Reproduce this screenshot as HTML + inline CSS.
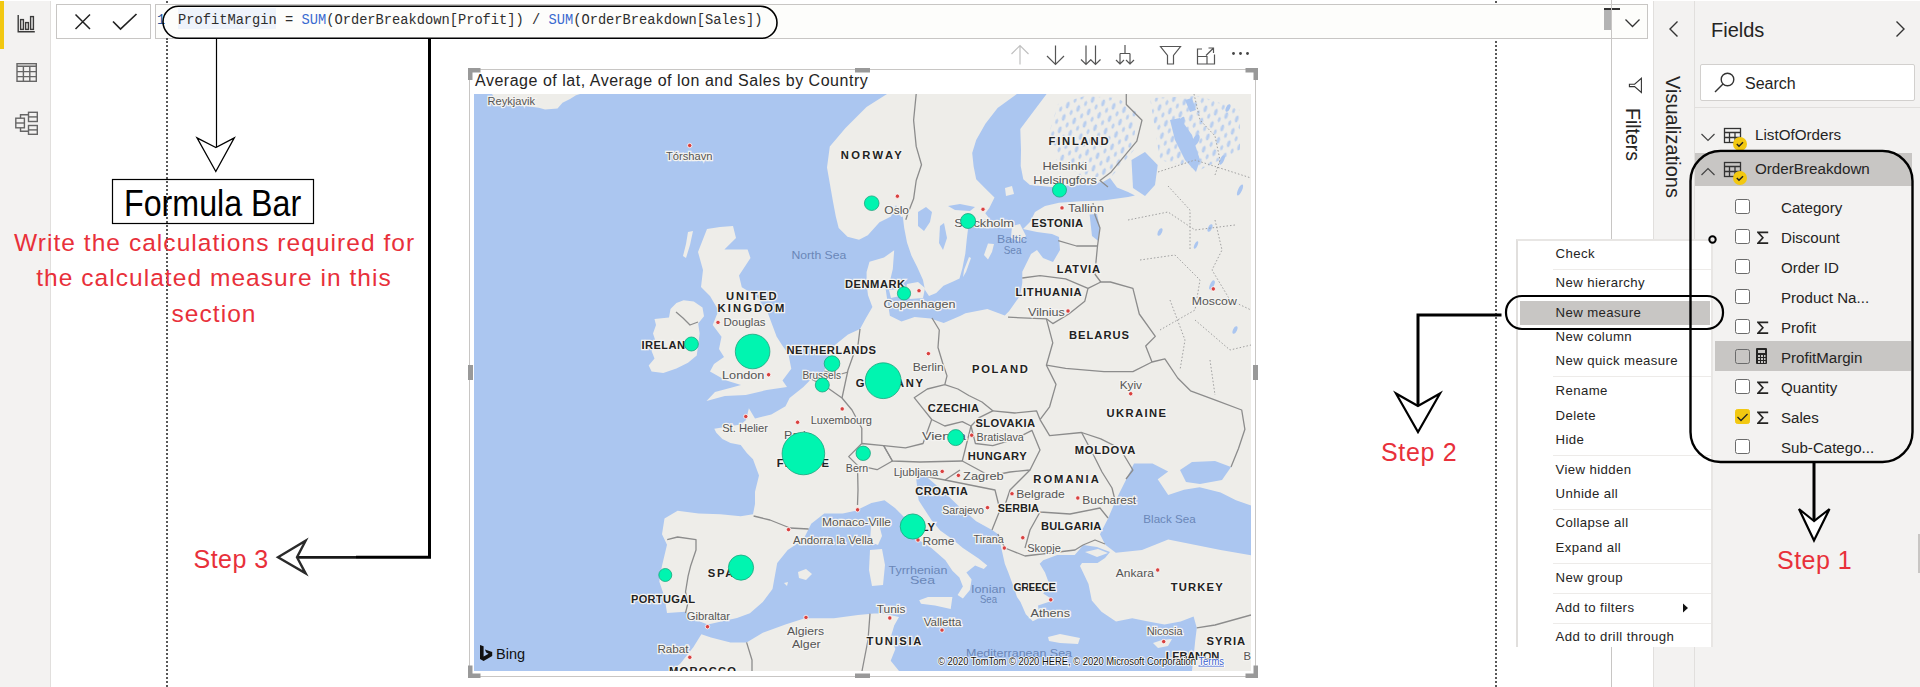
<!DOCTYPE html>
<html><head><meta charset="utf-8">
<style>
*{margin:0;padding:0;box-sizing:border-box}
html,body{width:1920px;height:687px;overflow:hidden;background:#fff;font-family:"Liberation Sans",sans-serif;position:relative}
.a{position:absolute}
#side{left:0;top:1px;width:51px;height:686px;background:#f3f2f1;border-right:1px solid #e1dfdd}
#ybar{left:0;top:1px;width:4px;height:48px;background:#f2c811}
.fbox{border:1px solid #c8c6c4;background:#fff}
.code{font-family:"Liberation Mono",monospace;font-size:13.72px;color:#2e2e2e;white-space:pre}
.menu div.it{position:absolute;left:37.5px;font-size:13.2px;letter-spacing:0.4px;color:#252423;white-space:nowrap}
.sep{position:absolute;left:35px;width:158px;height:1px;background:#edebe9}
.fld{position:absolute;left:86px;font-size:15.1px;color:#252423;white-space:nowrap}
.cb{position:absolute;left:40px;width:15px;height:15px;border:1px solid #6b6b6b;border-radius:2.5px;background:#fff}
.sig{position:absolute;left:62px}
.red{color:#e8303a;font-size:24px;white-space:nowrap}
</style></head>
<body>
<!-- left sidebar -->
<div id="side" class="a"></div>
<div id="ybar" class="a"></div>
<svg class="a" style="left:0;top:0" width="51" height="140">
  <g fill="none" stroke="#3a3a3a" stroke-width="1.4">
    <path d="M18.2 15v16.8h16.6"/>
    <rect x="20.6" y="19.6" width="2.8" height="9.8"/>
    <rect x="25.6" y="22.6" width="2.8" height="6.8"/>
    <rect x="30.6" y="16.6" width="2.8" height="12.8"/>
  </g>
  <g fill="none" stroke="#666" stroke-width="1.4">
    <rect x="17" y="63.7" width="19.3" height="17.6"/>
    <path d="M17 66.3h19.3M17 71.6h19.3M17 76.6h19.3M23.4 66.3v15M29.8 66.3v15"/>
    <rect x="15.8" y="118.2" width="8.6" height="9.6"/>
    <path d="M15.8 123h8.6"/>
    <rect x="28.5" y="112.3" width="8.8" height="9.2"/>
    <path d="M28.5 116.9h8.8"/>
    <rect x="28.5" y="125.5" width="8.8" height="8.8"/>
    <path d="M28.5 129.9h8.8"/>
    <path d="M20.5 118.2v-3.5h8M20.5 127.8v3.5h8"/>
  </g>
</svg>
<!-- formula bar -->
<div class="a fbox" style="left:56px;top:4px;width:95px;height:35px"></div>
<svg class="a" style="left:56px;top:4px" width="95" height="35">
  <path d="M19.5 10.5l14.5 14.5M34 10.5l-14.5 14.5" stroke="#222" stroke-width="1.5" fill="none"/>
  <path d="M57 17.5l7.5 7.5l16-15" stroke="#222" stroke-width="1.7" fill="none"/>
</svg>
<div class="a fbox" style="left:155px;top:4px;width:1493px;height:35px;background:#fdfdfb"></div>
<div class="a" style="left:178px;top:8px;width:98px;height:21px;background:#eef3fb"></div>
<div class="a code" style="left:157px;top:13.3px;color:#2b579a">1</div>
<div class="a code" style="left:178px;top:13.3px">ProfitMargin = <span style="color:#3a6ad0">SUM</span>(OrderBreakdown[Profit]) / <span style="color:#3a6ad0">SUM</span>(OrderBreakdown[Sales])</div>
<div class="a" style="left:1604px;top:10px;width:8px;height:20px;background:#b3b3b3"></div>
<div class="a" style="left:1604px;top:8px;width:16px;height:2px;background:#333"></div>
<svg class="a" style="left:1620px;top:14px" width="24" height="18">
  <path d="M5.5 5.5l7 7l7-7" stroke="#333" stroke-width="1.3" fill="none"/>
</svg>
<!-- dotted guide lines -->
<div class="a" style="left:166px;top:1px;width:0;height:2px;border-left:2px dotted #585858"></div>
<div class="a" style="left:166px;top:38px;width:0;height:649px;border-left:2px dotted #585858"></div>
<div class="a" style="left:1495px;top:1px;width:0;height:2px;border-left:2px dotted #585858"></div>
<div class="a" style="left:1495px;top:41px;width:0;height:646px;border-left:2px dotted #585858"></div>
<!-- right vertical line (filters pane edge) -->
<div class="a" style="left:1611px;top:0;width:1px;height:687px;background:#c8c6c4"></div>
<!-- visualizations & fields panes -->
<div class="a" style="left:1653px;top:1px;width:267px;height:686px;background:#f3f2f1;border-left:1px solid #e1dfdd"></div>
<div class="a" style="left:1694px;top:1px;width:1px;height:686px;background:#e1dfdd"></div>
<!-- filters / visualizations vertical labels -->
<div class="a" style="left:1623px;top:108px;width:20px;height:60px"><div style="position:absolute;left:0;top:0;transform-origin:0 0;transform:translate(20px,0) rotate(90deg);font-size:19.5px;color:#252423;white-space:nowrap;line-height:20px">Filters</div></div>
<svg class="a" style="left:1620px;top:70px" width="30" height="30"><path d="M21.4 8.3V22.5L14.6 16.6H9.4V14.2H14.6Z" fill="none" stroke="#333" stroke-width="1.1" stroke-linejoin="miter"/></svg>
<div class="a" style="left:1663px;top:76px;width:20px;height:130px"><div style="position:absolute;left:0;top:0;transform-origin:0 0;transform:translate(20px,0) rotate(90deg);font-size:20px;color:#252423;white-space:nowrap;line-height:20px">Visualizations</div></div>
<svg class="a" style="left:1664px;top:18px" width="20" height="22"><path d="M13.5 3.5l-7.5 7.5l7.5 7.5" stroke="#333" stroke-width="1.4" fill="none"/></svg>
<!-- fields pane -->
<div class="a" style="left:1711px;top:19px;font-size:20px;color:#252423">Fields</div>
<svg class="a" style="left:1890px;top:18px" width="20" height="22"><path d="M6.5 3.5l7.5 7.5l-7.5 7.5" stroke="#333" stroke-width="1.4" fill="none"/></svg>
<div class="a" style="left:1700px;top:64px;width:215px;height:37px;background:#fff;border:1px solid #d2d0ce;border-radius:2px"></div>
<svg class="a" style="left:1712px;top:70px" width="26" height="26"><circle cx="15.5" cy="9.5" r="6.3" fill="none" stroke="#333" stroke-width="1.4"/><path d="M11 14l-8 8" stroke="#333" stroke-width="1.5"/></svg>
<div class="a" style="left:1745px;top:74.5px;font-size:16px;color:#252423">Search</div>
<div class="a" style="left:1695px;top:107px;width:225px;height:1px;background:#e1dfdd"></div>
<div class="a" style="left:1695px;top:153px;width:217px;height:33px;background:#c8c6c4"></div>
<svg class="a" style="left:1698px;top:124px" width="20" height="60"><path d="M3.5 10l6.5 6.5l6.5-6.5" stroke="#444" stroke-width="1.2" fill="none"/><path d="M3.5 51l6.5-6.5l6.5 6.5" stroke="#444" stroke-width="1.2" fill="none"/></svg>
<svg class="a" style="left:1720px;top:124px" width="30" height="70">
 <g fill="none" stroke="#333" stroke-width="1.3">
  <rect x="4.5" y="4.5" width="16" height="14"/><path d="M4.5 8.5h16M4.5 13.5h16M9.5 8.5v10M15 8.5v10"/>
  <rect x="4.5" y="38.5" width="16" height="14"/><path d="M4.5 42.5h16M4.5 47.5h16M9.5 42.5v10M15 42.5v10"/>
 </g>
 <circle cx="20" cy="20" r="7" fill="#f2c811"/><path d="M16.8 20l2.2 2.2l4-4" stroke="#222" stroke-width="1.5" fill="none"/>
 <circle cx="20" cy="54" r="7" fill="#f2c811"/><path d="M16.8 54l2.2 2.2l4-4" stroke="#222" stroke-width="1.5" fill="none"/>
</svg>
<div class="a" style="left:1755px;top:125.5px;font-size:15.2px;color:#252423">ListOfOrders</div>
<div class="a" style="left:1755px;top:159.5px;font-size:15.2px;color:#252423">OrderBreakdown</div>
<div class="a" style="left:1715px;top:341px;width:196px;height:30px;background:#c8c6c4"></div>
<div class="a" style="left:1695px;top:190px;width:225px;height:270px">
 <div class="cb" style="top:9px"></div><div class="fld" style="top:9px">Category</div>
 <div class="cb" style="top:39px"></div><svg class="sig" style="top:40.5px" width="14" height="14"><path d="M11.2 1.4H1L5.9 6.75L1 12.1H11.2" fill="none" stroke="#252423" stroke-width="1.6" stroke-linejoin="miter"/></svg><div class="fld" style="top:39px">Discount</div>
 <div class="cb" style="top:69px"></div><div class="fld" style="top:69px">Order ID</div>
 <div class="cb" style="top:99px"></div><div class="fld" style="top:99px">Product Na...</div>
 <div class="cb" style="top:129px"></div><svg class="sig" style="top:130.5px" width="14" height="14"><path d="M11.2 1.4H1L5.9 6.75L1 12.1H11.2" fill="none" stroke="#252423" stroke-width="1.6" stroke-linejoin="miter"/></svg><div class="fld" style="top:129px">Profit</div>
 <div class="cb" style="top:159px;background:transparent"></div><div class="fld" style="top:159px">ProfitMargin</div>
 <div class="cb" style="top:189px"></div><svg class="sig" style="top:190.5px" width="14" height="14"><path d="M11.2 1.4H1L5.9 6.75L1 12.1H11.2" fill="none" stroke="#252423" stroke-width="1.6" stroke-linejoin="miter"/></svg><div class="fld" style="top:189px">Quantity</div>
 <div class="cb" style="top:219px;background:#f2c811;border-color:#f2c811"></div><svg class="sig" style="top:220.5px" width="14" height="14"><path d="M11.2 1.4H1L5.9 6.75L1 12.1H11.2" fill="none" stroke="#252423" stroke-width="1.6" stroke-linejoin="miter"/></svg><div class="fld" style="top:219px">Sales</div>
 <div class="cb" style="top:249px"></div><div class="fld" style="top:249px">Sub-Catego...</div>
</div>
<svg class="a" style="left:1734px;top:400px" width="20" height="30"><path d="M3.5 17l3.5 3.5l6.5-6.5" stroke="#222" stroke-width="1.3" fill="none"/></svg>
<svg class="a" style="left:1755px;top:347px" width="14" height="20"><rect x="1" y="1" width="11" height="16" rx="1" fill="#252423"/><rect x="3" y="3" width="7" height="3" fill="#c8c6c4"/><g fill="#c8c6c4"><rect x="3" y="8" width="2" height="2"/><rect x="6" y="8" width="2" height="2"/><rect x="9" y="8" width="1.5" height="2"/><rect x="3" y="11" width="2" height="2"/><rect x="6" y="11" width="2" height="2"/><rect x="9" y="11" width="1.5" height="2"/><rect x="3" y="14" width="2" height="2"/><rect x="6" y="14" width="2" height="2"/><rect x="9" y="14" width="1.5" height="2"/></g></svg>
<div class="a" style="left:1918px;top:534px;width:2px;height:39px;background:#c8c6c4"></div>
<!-- context menu -->
<div class="a menu" style="left:1516px;top:239px;width:197px;height:408px;background:#fff;border-left:2px solid #e1dfdd;border-top:2px solid #e8e6e4;border-right:2px solid #e8e6e4">
 <div style="position:absolute;left:2px;top:60px;width:190px;height:24px;background:#c8c6c4"></div>
 <div class="it" style="top:5px">Check</div>
 <div class="sep" style="top:28px"></div>
 <div class="it" style="top:34px">New hierarchy</div>
 <div class="it" style="top:64px">New measure</div>
 <div class="it" style="top:88px">New column</div>
 <div class="it" style="top:112px">New quick measure</div>
 <div class="sep" style="top:135px"></div>
 <div class="it" style="top:142px">Rename</div>
 <div class="it" style="top:167px">Delete</div>
 <div class="it" style="top:191px">Hide</div>
 <div class="sep" style="top:214px"></div>
 <div class="it" style="top:221px">View hidden</div>
 <div class="it" style="top:245px">Unhide all</div>
 <div class="sep" style="top:268px"></div>
 <div class="it" style="top:274px">Collapse all</div>
 <div class="it" style="top:299px">Expand all</div>
 <div class="sep" style="top:322px"></div>
 <div class="it" style="top:329px">New group</div>
 <div class="sep" style="top:352px"></div>
 <div class="it" style="top:359px">Add to filters</div>
 <svg style="position:absolute;left:164px;top:361px" width="8" height="12"><path d="M1 1.5l5 4.5l-5 4.5z" fill="#111"/></svg>
 <div class="sep" style="top:382px"></div>
 <div class="it" style="top:388px">Add to drill through</div>
</div>
<!-- visual container -->
<div class="a" style="left:469px;top:69px;width:787px;height:608px;border:1px solid #c8c6c4;background:#fff"></div>
<div class="a" style="left:475px;top:72px;font-size:16px;color:#252423;white-space:nowrap;letter-spacing:0.52px">Average of lat, Average of lon and Sales by Country</div>
<!--MAP--><svg class="a" style="left:474px;top:94px" width="777" height="577" viewBox="474 94 777 577">
<rect x="474" y="94" width="777" height="577" fill="#abc6f0"/>
<g fill="#eeede9">
<path d="M492.0 94.0 L496.0 100.0 L505.0 104.0 L520.0 105.3 L538.8 107.8 L545.0 109.6 L557.5 108.4 L562.5 102.8 L570.0 99.0 L576.0 95.3 L580.0 94.0Z"/>
<path d="M887.0 94.0 L866.5 107.0 L845.5 128.0 L829.8 146.4 L827.0 167.4 L833.0 201.8 L835.8 216.4 L838.7 228.0 L847.5 236.8 L859.0 239.7 L867.8 235.3 L879.5 222.2 L891.0 216.4 L896.0 205.0 L901.0 217.0 L902.8 216.4 L904.2 228.0 L907.0 242.6 L911.5 255.7 L917.3 267.3 L923.0 280.0 L925.0 290.0 L929.0 296.0 L936.2 293.0 L943.5 285.7 L953.7 281.3 L959.5 278.4 L962.4 268.2 L965.3 253.7 L966.8 239.1 L968.2 227.5 L975.0 222.0 L989.3 218.5 L985.3 213.3 L989.3 208.0 L994.5 197.6 L986.6 189.7 L976.2 179.3 L973.6 166.2 L972.2 153.1 L976.2 140.0 L985.4 123.7 L997.6 108.0 L1016.9 94.0Z"/>
<path d="M1046.6 94.0 L1030.8 115.0 L1020.3 129.0 L1021.0 150.0 L1020.7 166.0 L1023.3 179.3 L1030.0 185.0 L1052.0 187.0 L1070.0 185.0 L1088.0 184.0 L1103.0 182.0 L1110.0 178.0 L1117.0 187.5 L1128.0 192.0 L1135.0 195.5 L1128.0 197.0 L1103.0 200.6 L1081.0 201.3 L1059.0 202.8 L1045.0 206.0 L1035.0 212.0 L1030.0 222.0 L1023.0 229.0 L1037.0 232.0 L1052.0 234.0 L1059.0 237.0 L1060.0 250.0 L1053.0 262.0 L1043.0 258.0 L1037.0 250.0 L1031.0 254.0 L1022.3 271.7 L1022.3 282.7 L1020.0 295.8 L1009.2 311.0 L1004.8 315.4 L987.4 309.0 L965.5 313.2 L960.0 316.0 L943.7 323.0 L930.6 318.6 L914.6 317.0 L901.5 321.5 L889.9 315.7 L887.0 298.2 L885.5 288.0 L890.0 280.8 L892.8 269.0 L894.2 250.2 L884.0 257.5 L869.5 261.8 L866.6 272.0 L866.6 283.7 L868.0 295.3 L872.4 307.0 L866.0 318.0 L860.0 329.0 L848.0 334.5 L835.0 345.0 L829.6 353.0 L824.3 371.0 L811.2 379.0 L803.4 387.0 L789.6 398.0 L785.5 406.3 L771.3 414.4 L755.0 418.5 L748.9 408.3 L746.0 420.0 L740.7 424.6 L726.5 426.7 L714.3 428.7 L716.3 432.8 L722.4 438.9 L730.5 443.0 L740.7 445.0 L746.8 453.1 L753.0 459.2 L759.0 475.5 L755.0 491.8 L755.0 504.0 L753.0 514.2 L740.7 516.3 L720.4 514.2 L698.6 513.4 L677.6 510.7 L664.5 518.6 L662.0 534.3 L667.0 544.8 L662.0 565.7 L659.3 581.5 L664.5 597.0 L667.0 613.0 L685.2 611.7 L699.8 621.4 L707.8 624.6 L737.0 618.0 L749.9 613.3 L762.8 602.0 L772.5 589.0 L777.2 563.0 L787.7 550.0 L803.4 539.6 L808.6 529.0 L811.2 523.8 L824.3 513.4 L842.7 513.4 L855.7 510.7 L871.4 503.0 L884.5 500.3 L895.0 508.0 L905.5 518.6 L912.0 530.0 L917.5 539.2 L931.4 548.0 L945.4 560.2 L952.4 570.7 L959.4 577.6 L962.9 586.4 L957.6 595.0 L962.9 598.6 L969.9 589.9 L971.6 579.4 L966.4 572.4 L975.1 565.4 L983.8 568.9 L987.3 565.4 L978.6 558.4 L962.9 548.0 L952.4 539.2 L940.2 530.5 L931.4 520.0 L918.6 500.3 L916.0 476.7 L926.5 476.7 L944.8 492.4 L958.0 505.5 L976.2 521.2 L992.0 530.0 L997.8 534.0 L1001.3 548.0 L1004.8 563.7 L1008.3 572.4 L1013.5 586.4 L1017.0 596.9 L1020.5 602.0 L1025.8 614.3 L1032.8 621.3 L1039.7 617.8 L1038.0 605.6 L1048.5 602.0 L1053.7 600.3 L1043.2 593.4 L1050.2 586.4 L1045.0 572.4 L1039.7 563.7 L1043.2 560.2 L1057.2 555.0 L1074.7 555.0 L1083.4 545.0 L1097.0 547.0 L1110.0 552.0 L1105.0 558.0 L1097.5 563.0 L1082.0 563.0 L1080.0 566.0 L1088.5 584.0 L1091.8 600.4 L1101.5 611.7 L1116.0 621.4 L1132.2 618.2 L1148.3 621.4 L1164.5 624.6 L1180.6 621.4 L1193.6 616.5 L1196.8 627.9 L1195.2 640.8 L1193.6 657.0 L1192.0 671.0 L1251.0 671.0 L1251.0 94.0Z"/>
<path d="M672.0 671.0 L680.4 663.4 L693.3 647.2 L701.4 634.3 L711.0 637.5 L730.5 642.4 L746.6 642.4 L762.8 632.7 L785.4 624.6 L804.8 618.2 L833.9 618.2 L858.0 615.0 L874.0 613.6 L883.6 613.6 L899.0 617.0 L894.2 625.4 L890.7 637.2 L895.4 649.0 L890.7 660.8 L899.0 671.0Z"/>
<path d="M707.0 229.0 L720.0 227.0 L733.0 226.0 L736.0 238.0 L724.4 249.5 L747.6 249.5 L750.5 258.0 L739.0 275.6 L741.8 287.3 L756.4 296.0 L768.0 313.5 L776.7 336.7 L782.0 345.0 L788.4 354.0 L791.3 368.7 L782.5 380.4 L787.0 387.0 L766.7 390.0 L745.8 395.0 L724.8 396.0 L706.5 401.0 L715.0 392.0 L730.0 388.0 L741.0 385.0 L728.0 381.0 L721.5 378.0 L710.0 371.6 L714.0 364.0 L724.0 357.0 L719.0 349.0 L721.5 336.7 L712.7 325.0 L718.5 310.5 L710.0 296.0 L701.0 287.0 L703.0 270.0 L698.0 252.0Z"/>
<path d="M683.6 300.2 L693.8 301.6 L702.5 307.5 L704.0 316.2 L698.2 323.5 L699.6 333.6 L698.2 345.3 L696.7 355.5 L688.0 362.7 L676.4 368.5 L663.3 373.0 L651.6 371.5 L648.7 365.6 L654.5 358.4 L651.6 351.0 L656.0 342.4 L653.0 333.6 L656.0 325.0 L654.5 319.0 L669.0 317.6 L670.5 309.0 L676.4 303.0Z"/>
<path d="M688.0 232.0 L693.0 231.0 L690.0 245.0 L686.0 258.0 L683.0 256.0 L686.0 244.0Z"/>
</g>
<g fill="#abc6f0">
<path d="M1115.8 552.7 L1105.3 544.8 L1100.0 534.3 L1108.0 518.6 L1115.8 500.3 L1126.3 479.3 L1134.0 463.6 L1152.5 463.6 L1168.2 471.4 L1157.7 479.3 L1168.2 495.0 L1184.0 489.8 L1199.6 487.2 L1220.6 492.4 L1236.0 500.3 L1251.0 505.5 L1251.0 555.3 L1220.6 550.0 L1194.4 544.8 L1168.2 539.6 L1142.0 550.0Z"/>
<path d="M1180.0 470.0 L1192.0 462.0 L1215.0 461.0 L1231.0 467.0 L1222.0 480.0 L1200.0 484.0 L1186.0 482.0Z"/>
<path d="M1131.5 160.0 L1145.0 152.0 L1157.7 165.0 L1155.0 185.0 L1145.0 196.0 L1133.0 188.0Z"/>
<path d="M1170.0 120.0 L1180.0 118.0 L1192.0 135.0 L1200.0 160.0 L1196.0 172.0 L1185.0 160.0 L1175.0 140.0Z"/>
<path d="M1089.6 214.5 L1097.0 214.0 L1100.0 228.0 L1098.0 240.7 L1092.0 236.0Z"/>
<path d="M918.0 212.0 L926.0 207.0 L932.0 212.0 L930.0 222.0 L924.0 231.0 L918.0 226.0Z"/>
<path d="M940.0 226.0 L944.0 223.0 L947.0 238.0 L943.0 250.0 L939.0 243.0Z"/>
<path d="M948.0 206.0 L960.0 204.0 L975.0 207.0 L970.0 211.0 L955.0 210.0Z"/>
<path d="M1185.0 100.0 L1192.0 98.0 L1196.0 110.0 L1190.0 112.0Z"/>
</g>
<g fill="#eeede9">
<path d="M907.0 284.0 L918.0 282.0 L925.0 288.0 L923.0 298.0 L910.0 299.0 L905.0 292.0Z"/>
<path d="M889.0 290.0 L898.0 289.0 L900.0 296.0 L891.0 298.0Z"/>
<path d="M988.0 243.5 L994.0 244.0 L992.0 252.0 L988.0 259.5 L984.0 255.0Z"/>
<path d="M969.0 257.0 L971.0 258.0 L966.0 272.0 L963.0 277.0 L964.0 270.0Z"/>
<path d="M871.0 526.0 L879.0 524.0 L882.0 536.0 L878.0 545.0 L870.0 542.0Z"/>
<path d="M870.0 550.0 L882.0 549.0 L885.0 565.0 L883.0 585.0 L872.0 586.0 L869.0 570.0Z"/>
<path d="M919.2 600.3 L928.0 596.9 L952.4 596.9 L950.7 609.0 L935.0 605.6 L921.0 603.8Z"/>
<path d="M798.0 572.0 L806.0 569.0 L812.0 574.0 L806.0 580.0 L799.0 578.0Z"/>
<path d="M784.0 583.0 L788.0 582.0 L787.0 586.0Z"/>
<path d="M1048.0 637.0 L1060.0 634.0 L1080.0 638.0 L1078.0 644.0 L1060.0 643.0 L1049.0 641.0Z"/>
<path d="M1153.0 643.0 L1162.0 640.0 L1172.0 639.0 L1168.0 646.0 L1158.0 648.0Z"/>
<path d="M1012.0 226.0 L1020.0 224.0 L1026.0 236.0 L1020.0 242.0 L1011.0 238.0Z"/>
<path d="M1005.0 188.0 L1012.0 186.0 L1014.0 194.0 L1006.0 196.0Z"/>
<path d="M1085.0 552.0 L1098.0 549.0 L1108.0 553.0 L1097.0 557.0Z"/>
</g>
<defs><pattern id="lk" width="11" height="13" patternUnits="userSpaceOnUse" patternTransform="rotate(18)"><ellipse cx="3" cy="4" rx="1.6" ry="3.6" fill="#abc6f0"/><ellipse cx="8.5" cy="10" rx="1.3" ry="2.8" fill="#abc6f0"/></pattern></defs>
<path d="M1058.0 104.0 L1085.0 96.0 L1118.0 98.0 L1136.0 112.0 L1134.0 150.0 L1112.0 176.0 L1080.0 178.0 L1056.0 160.0 L1050.0 130.0Z" fill="url(#lk)" opacity="0.8"/>
<path d="M1150.0 98.0 L1200.0 96.0 L1240.0 110.0 L1240.0 150.0 L1200.0 170.0 L1160.0 160.0Z" fill="url(#lk)" opacity="0.8"/>
<g fill="#abc6f0">
<ellipse cx="1180" cy="125" rx="3" ry="9" transform="rotate(25 1180 125)"/>
<ellipse cx="1196" cy="140" rx="3" ry="6" transform="rotate(25 1196 140)"/>
<ellipse cx="1228" cy="108" rx="2" ry="4" transform="rotate(25 1228 108)"/>
<ellipse cx="1222" cy="160" rx="2" ry="5" transform="rotate(25 1222 160)"/>
<ellipse cx="1160" cy="232" rx="2" ry="4" transform="rotate(25 1160 232)"/>
<ellipse cx="1240" cy="190" rx="2" ry="6" transform="rotate(25 1240 190)"/>
<ellipse cx="1210" cy="228" rx="2" ry="4" transform="rotate(25 1210 228)"/>
<ellipse cx="1212" cy="285" rx="2" ry="5" transform="rotate(25 1212 285)"/>
<ellipse cx="1196" cy="245" rx="1.5" ry="4" transform="rotate(25 1196 245)"/>
<ellipse cx="1235" cy="330" rx="2" ry="4" transform="rotate(25 1235 330)"/>
</g>
<g fill="none" stroke="#8c8c8c" stroke-width="1.3" stroke-linejoin="round">
<path d="M916.2 94.0 L913.6 120.2 L916.2 146.4 L921.5 164.7 L916.2 180.5 L913.6 198.8 L908.4 211.9 L905.8 219.8"/>
<path d="M1126.3 94.0 L1126.3 104.5 L1142.0 120.2 L1136.8 141.2 L1123.7 156.9 L1110.6 172.6 L1100.0 180.5 L1108.0 187.0"/>
<path d="M1093.0 203.0 L1095.0 215.0 L1100.0 228.0 L1097.5 246.0 L1094.8 274.0 L1100.8 282.0"/>
<path d="M1058.2 240.7 L1076.5 246.0 L1097.5 246.0"/>
<path d="M676.0 312.0 L683.0 318.0 L690.0 325.0 L698.0 322.0"/>
<path d="M1022.3 278.0 L1040.0 275.6 L1065.6 278.8 L1088.0 288.4 L1100.8 282.0"/>
<path d="M1008.0 317.2 L1046.4 318.8 L1052.8 323.6 L1068.8 314.0 L1084.8 301.2 L1088.0 288.4"/>
<path d="M1100.8 282.0 L1110.4 282.0 L1132.9 288.4 L1139.3 314.0 L1155.3 336.4 L1145.7 346.0 L1152.0 362.0"/>
<path d="M1046.4 318.8 L1052.8 342.8 L1046.4 365.2 L1056.0 384.4 L1049.6 406.8 L1040.0 419.6"/>
<path d="M1046.4 365.2 L1065.6 368.4 L1104.0 371.6 L1132.9 371.6 L1152.0 362.0 L1164.9 358.8 L1177.7 378.0 L1190.5 390.8 L1216.1 400.4 L1241.7 410.0 L1244.9 429.3 L1238.5 448.5 L1231.0 467.0"/>
<path d="M1040.0 419.6 L1049.6 435.7 L1081.6 432.5 L1100.8 438.9 L1120.0 448.5 L1132.9 470.0 L1126.0 479.0"/>
<path d="M1081.6 432.5 L1092.0 452.0 L1102.0 472.0 L1112.0 488.0 L1115.0 500.0"/>
<path d="M1005.0 505.0 L1040.0 512.0 L1070.0 514.0 L1100.0 508.0 L1108.0 518.0"/>
<path d="M932.0 318.0 L939.3 330.0 L938.0 347.5 L942.6 362.8 L947.0 375.9 L944.8 384.6 L927.3 389.0 L914.2 397.7 L923.0 408.6 L931.7 419.5 L944.8 426.0 L962.3 421.7 L971.0 426.0 L979.7 417.3 L992.8 410.8 L982.0 402.0 L968.8 395.5 L957.9 389.0 L944.8 384.6"/>
<path d="M992.8 410.8 L1014.7 413.0 L1036.5 410.8 L1040.0 419.6"/>
<path d="M971.0 426.0 L975.4 443.5 L992.8 445.7 L1014.7 439.2 L1032.0 430.4 L1040.0 450.0 L1030.0 470.0 L1010.0 472.0 L990.0 476.0 L962.3 461.0 L971.0 426.0"/>
<path d="M931.7 419.5 L923.0 443.5 L905.5 447.9 L883.7 445.7 L892.4 461.0 L920.0 462.0 L962.3 461.0"/>
<path d="M861.8 443.5 L883.7 445.7 L892.4 461.0 L877.1 469.7 L857.5 465.4 L848.7 456.6 L861.8 443.5"/>
<path d="M811.2 379.0 L825.0 386.0 L842.0 398.0 L852.0 410.0 L861.8 428.3 L861.8 443.5"/>
<path d="M860.0 329.0 L858.0 345.0 L853.0 356.0 L848.0 370.0 L842.0 398.0"/>
<path d="M824.3 371.0 L838.0 375.0 L848.0 372.0"/>
<path d="M857.5 465.4 L858.0 490.0 L857.5 505.0"/>
<path d="M753.6 516.0 L770.0 520.0 L790.0 528.0 L808.6 529.0"/>
<path d="M667.2 539.6 L677.6 537.0 L696.0 539.6 L696.0 550.0 L690.7 565.7 L688.1 576.2 L685.5 592.0 L688.1 602.4 L685.5 613.0"/>
<path d="M926.5 476.7 L945.0 480.0 L960.0 470.0"/>
<path d="M945.0 480.0 L975.0 486.0 L995.0 490.0 L1000.0 510.0 L992.0 530.0"/>
<path d="M1030.0 470.0 L1010.0 490.0 L1005.0 505.0 L1000.0 510.0"/>
<path d="M1040.0 512.0 L1030.0 530.0 L1025.0 548.0"/>
<path d="M997.8 534.0 L1005.0 548.0 L1025.0 556.0 L1050.0 553.0 L1075.0 550.0 L1083.0 545.0"/>
<path d="M1083.0 545.0 L1095.0 540.0 L1105.0 544.0"/>
<path d="M1196.8 627.9 L1215.0 625.0 L1251.0 615.0"/>
<path d="M746.6 642.4 L752.0 660.0 L752.0 671.0"/>
<path d="M870.0 613.6 L868.0 640.0 L862.0 671.0"/>
</g>
<g fill="none" stroke="#a0a0a0" stroke-width="1" stroke-dasharray="1.5 2">
<path d="M1194.0 94.0 L1200.0 120.0 L1215.0 136.0 L1220.0 160.0 L1215.0 175.0"/>
<path d="M1158.0 172.0 L1195.0 160.0 L1251.0 178.0"/>
<path d="M1168.0 186.0 L1190.0 210.0 L1190.0 250.0"/>
<path d="M1128.0 220.0 L1168.0 212.0 L1195.0 230.0 L1235.0 225.0"/>
<path d="M1215.0 220.0 L1222.0 250.0 L1212.0 270.0 L1230.0 300.0 L1251.0 310.0"/>
<path d="M1140.0 260.0 L1175.0 255.0 L1200.0 280.0 L1195.0 310.0 L1160.0 330.0"/>
<path d="M1170.0 300.0 L1185.0 340.0 L1180.0 370.0"/>
<path d="M1195.0 320.0 L1230.0 350.0 L1251.0 345.0"/>
<path d="M1210.0 360.0 L1215.0 395.0"/>
</g>
<style>.lc{font:bold 11.2px "Liberation Sans",sans-serif;fill:#222;stroke:#f4f3f0;stroke-width:2.5px;paint-order:stroke}.lt{font:11.5px "Liberation Sans",sans-serif;fill:#555;stroke:#f4f3f0;stroke-width:2.5px;paint-order:stroke}.ls{font:11.5px "Liberation Sans",sans-serif;fill:#6a87b8}</style>
<g fill="#d9413f" stroke="#fff" stroke-width="0.8">
<circle cx="689.7" cy="145.5" r="2.2"/>
<circle cx="718" cy="322.4" r="2.2"/>
<circle cx="768.6" cy="374.7" r="2.2"/>
<circle cx="897.4" cy="196.2" r="2.2"/>
<circle cx="983" cy="209.3" r="2.2"/>
<circle cx="1062" cy="207.9" r="2.2"/>
<circle cx="1068" cy="311" r="2.2"/>
<circle cx="919" cy="290.7" r="2.2"/>
<circle cx="928.4" cy="353.6" r="2.2"/>
<circle cx="1213.3" cy="288.9" r="2.2"/>
<circle cx="1130.7" cy="393.7" r="2.2"/>
<circle cx="1012" cy="493.7" r="2.2"/>
<circle cx="1077.8" cy="498" r="2.2"/>
<circle cx="1022.8" cy="537.7" r="2.2"/>
<circle cx="1157.7" cy="570" r="2.2"/>
<circle cx="1050.8" cy="599.8" r="2.2"/>
<circle cx="1163.7" cy="641.6" r="2.2"/>
<circle cx="942.2" cy="471.4" r="2.2"/>
<circle cx="958.4" cy="475.4" r="2.2"/>
<circle cx="987.5" cy="507.6" r="2.2"/>
<circle cx="857.6" cy="509.8" r="2.2"/>
<circle cx="918" cy="540" r="2.2"/>
<circle cx="1004.3" cy="548" r="2.2"/>
<circle cx="889.8" cy="618" r="2.2"/>
<circle cx="788.5" cy="529.6" r="2.2"/>
<circle cx="745.8" cy="416.5" r="2.2"/>
<circle cx="842.2" cy="408.9" r="2.2"/>
<circle cx="797.6" cy="422.3" r="2.2"/>
<circle cx="971.7" cy="435.2" r="2.2"/>
<circle cx="707.5" cy="626.7" r="2.2"/>
<circle cx="689.8" cy="657.3" r="2.2"/>
<circle cx="806" cy="617.4" r="2.2"/>
<circle cx="942" cy="630.1" r="2.2"/>
<circle cx="1192" cy="660" r="2.2"/>
<circle cx="963" cy="436" r="2.2"/>
</g>
<text x="487.5" y="104.5" textLength="47.5" lengthAdjust="spacingAndGlyphs" class="lt">Reykjavik</text>
<text x="666.0" y="160.2" textLength="46.5" lengthAdjust="spacingAndGlyphs" class="lt">Tórshavn</text>
<text x="791.4" y="259.2" textLength="54.9" lengthAdjust="spacingAndGlyphs" class="ls">North Sea</text>
<text x="726.0" y="299.8" textLength="50.7" lengthAdjust="spacing" class="lc">UNITED</text>
<text x="717.6" y="311.6" textLength="66.7" lengthAdjust="spacing" class="lc">KINGDOM</text>
<text x="723.5" y="326.2" textLength="42.0" lengthAdjust="spacingAndGlyphs" class="lt">Douglas</text>
<text x="641.6" y="349.4" textLength="43.4" lengthAdjust="spacing" class="lc">IRELAN</text>
<text x="722.0" y="378.9" textLength="42.4" lengthAdjust="spacingAndGlyphs" class="lt">London</text>
<text x="786.4" y="354.2" textLength="89.6" lengthAdjust="spacing" class="lc">NETHERLANDS</text>
<text x="802.4" y="378.9" textLength="38.6" lengthAdjust="spacingAndGlyphs" class="lt">Brussels</text>
<text x="840.8" y="159.4" textLength="61.0" lengthAdjust="spacing" class="lc">NORWAY</text>
<text x="884.3" y="214.0" textLength="24.7" lengthAdjust="spacingAndGlyphs" class="lt">Oslo</text>
<text x="954.2" y="226.6" textLength="59.8" lengthAdjust="spacingAndGlyphs" class="lt">Stockholm</text>
<text x="997.0" y="242.8" textLength="30.0" lengthAdjust="spacingAndGlyphs" class="ls">Baltic</text>
<text x="1003.7" y="253.8" textLength="17.8" lengthAdjust="spacingAndGlyphs" class="ls">Sea</text>
<text x="1031.4" y="227.4" textLength="51.6" lengthAdjust="spacing" class="lc">ESTONIA</text>
<text x="1068.0" y="212.2" textLength="36.0" lengthAdjust="spacingAndGlyphs" class="lt">Tallinn</text>
<text x="1056.8" y="273.0" textLength="43.2" lengthAdjust="spacing" class="lc">LATVIA</text>
<text x="1015.4" y="296.1" textLength="66.3" lengthAdjust="spacing" class="lc">LITHUANIA</text>
<text x="1028.0" y="315.5" textLength="36.7" lengthAdjust="spacingAndGlyphs" class="lt">Vilnius</text>
<text x="845.0" y="287.8" textLength="60.2" lengthAdjust="spacing" class="lc">DENMARK</text>
<text x="883.6" y="307.8" textLength="71.8" lengthAdjust="spacingAndGlyphs" class="lt">Copenhagen</text>
<text x="1069.0" y="339.4" textLength="60.0" lengthAdjust="spacing" class="lc">BELARUS</text>
<text x="912.7" y="371.3" textLength="31.0" lengthAdjust="spacingAndGlyphs" class="lt">Berlin</text>
<text x="972.0" y="373.3" textLength="55.8" lengthAdjust="spacing" class="lc">POLAND</text>
<text x="1048.5" y="145.0" textLength="60.0" lengthAdjust="spacing" class="lc">FINLAND</text>
<text x="1042.4" y="169.5" textLength="44.6" lengthAdjust="spacingAndGlyphs" class="lt">Helsinki</text>
<text x="1033.3" y="183.9" textLength="63.7" lengthAdjust="spacingAndGlyphs" class="lt">Helsingfors</text>
<text x="1191.8" y="304.9" textLength="45.0" lengthAdjust="spacingAndGlyphs" class="lt">Moscow</text>
<text x="1119.7" y="388.7" textLength="22.3" lengthAdjust="spacingAndGlyphs" class="lt">Kyiv</text>
<text x="1106.6" y="416.7" textLength="59.4" lengthAdjust="spacing" class="lc">UKRAINE</text>
<text x="1074.7" y="454.1" textLength="60.7" lengthAdjust="spacing" class="lc">MOLDOVA</text>
<text x="1033.3" y="483.2" textLength="65.5" lengthAdjust="spacing" class="lc">ROMANIA</text>
<text x="1016.2" y="497.9" textLength="48.5" lengthAdjust="spacingAndGlyphs" class="lt">Belgrade</text>
<text x="1082.3" y="503.9" textLength="53.9" lengthAdjust="spacingAndGlyphs" class="lt">Bucharest</text>
<text x="1041.0" y="530.4" textLength="60.4" lengthAdjust="spacing" class="lc">BULGARIA</text>
<text x="1027.2" y="551.6" textLength="33.6" lengthAdjust="spacingAndGlyphs" class="lt">Skopje</text>
<text x="1143.3" y="523.4" textLength="52.4" lengthAdjust="spacingAndGlyphs" class="ls">Black Sea</text>
<text x="1115.8" y="576.5" textLength="38.0" lengthAdjust="spacingAndGlyphs" class="lt">Ankara</text>
<text x="1170.8" y="590.6" textLength="51.9" lengthAdjust="spacing" class="lc">TURKEY</text>
<text x="1013.6" y="590.6" textLength="42.4" lengthAdjust="spacing" class="lc">GREECE</text>
<text x="1030.6" y="616.6" textLength="39.4" lengthAdjust="spacingAndGlyphs" class="lt">Athens</text>
<text x="1146.7" y="634.8" textLength="35.9" lengthAdjust="spacingAndGlyphs" class="lt">Nicosia</text>
<text x="1206.5" y="644.7" textLength="38.7" lengthAdjust="spacing" class="lc">SYRIA</text>
<text x="1165.8" y="659.7" textLength="53.6" lengthAdjust="spacing" class="lc">LEBANON</text>
<text x="966.0" y="656.5" textLength="106.0" lengthAdjust="spacingAndGlyphs" class="ls">Mediterranean Sea</text>
<text x="845.8" y="471.7" textLength="22.5" lengthAdjust="spacingAndGlyphs" class="lt">Bern</text>
<text x="967.7" y="459.5" textLength="59.0" lengthAdjust="spacing" class="lc">HUNGARY</text>
<text x="893.7" y="476.2" textLength="44.5" lengthAdjust="spacingAndGlyphs" class="lt">Ljubljana</text>
<text x="963.1" y="480.1" textLength="40.6" lengthAdjust="spacingAndGlyphs" class="lt">Zagreb</text>
<text x="915.2" y="495.0" textLength="52.6" lengthAdjust="spacing" class="lc">CROATIA</text>
<text x="942.2" y="513.6" textLength="41.8" lengthAdjust="spacingAndGlyphs" class="lt">Sarajevo</text>
<text x="997.7" y="512.0" textLength="41.3" lengthAdjust="spacing" class="lc">SERBIA</text>
<text x="822.0" y="526.2" textLength="69.0" lengthAdjust="spacingAndGlyphs" class="lt">Monaco-Ville</text>
<text x="792.9" y="543.8" textLength="80.1" lengthAdjust="spacingAndGlyphs" class="lt">Andorra la Vella</text>
<text x="922.5" y="545.1" textLength="32.0" lengthAdjust="spacingAndGlyphs" class="lt">Rome</text>
<text x="973.6" y="543.2" textLength="30.1" lengthAdjust="spacingAndGlyphs" class="lt">Tirana</text>
<text x="888.5" y="573.7" textLength="58.9" lengthAdjust="spacingAndGlyphs" class="ls">Tyrrhenian</text>
<text x="910.0" y="584.2" textLength="25.0" lengthAdjust="spacingAndGlyphs" class="ls">Sea</text>
<text x="971.0" y="593.3" textLength="34.6" lengthAdjust="spacingAndGlyphs" class="ls">Ionian</text>
<text x="980.0" y="602.5" textLength="17.0" lengthAdjust="spacingAndGlyphs" class="ls">Sea</text>
<text x="876.7" y="613.2" textLength="28.8" lengthAdjust="spacingAndGlyphs" class="lt">Tunis</text>
<text x="776.7" y="467.2" textLength="52.3" lengthAdjust="spacing" class="lc">FRANCE</text>
<text x="707.8" y="576.7" textLength="40.2" lengthAdjust="spacing" class="lc">SPAIN</text>
<text x="631.0" y="602.9" textLength="64.2" lengthAdjust="spacing" class="lc">PORTUGAL</text>
<text x="686.8" y="619.7" textLength="43.2" lengthAdjust="spacingAndGlyphs" class="lt">Gibraltar</text>
<text x="722.2" y="432.2" textLength="45.8" lengthAdjust="spacingAndGlyphs" class="lt">St. Helier</text>
<text x="810.7" y="423.9" textLength="61.3" lengthAdjust="spacingAndGlyphs" class="lt">Luxembourg</text>
<text x="784.0" y="439.2" textLength="28.0" lengthAdjust="spacingAndGlyphs" class="lt">Paris</text>
<text x="855.7" y="387.2" textLength="67.3" lengthAdjust="spacing" class="lc">GERMANY</text>
<text x="927.8" y="411.9" textLength="51.2" lengthAdjust="spacing" class="lc">CZECHIA</text>
<text x="975.4" y="426.8" textLength="59.6" lengthAdjust="spacing" class="lc">SLOVAKIA</text>
<text x="921.9" y="440.2" textLength="44.1" lengthAdjust="spacingAndGlyphs" class="lt">Vienna</text>
<text x="976.5" y="441.2" textLength="47.3" lengthAdjust="spacingAndGlyphs" class="lt">Bratislava</text>
<text x="657.4" y="652.7" textLength="31.1" lengthAdjust="spacingAndGlyphs" class="lt">Rabat</text>
<text x="787.0" y="634.5" textLength="37.2" lengthAdjust="spacingAndGlyphs" class="lt">Algiers</text>
<text x="791.9" y="647.9" textLength="28.7" lengthAdjust="spacingAndGlyphs" class="lt">Alger</text>
<text x="866.5" y="644.5" textLength="54.8" lengthAdjust="spacing" class="lc">TUNISIA</text>
<text x="923.7" y="625.5" textLength="37.7" lengthAdjust="spacingAndGlyphs" class="lt">Valletta</text>
<text x="669.0" y="675.4" textLength="67.0" lengthAdjust="spacing" class="lc">MOROCCO</text>
<text x="905.0" y="530.9" textLength="30.0" lengthAdjust="spacing" class="lc">ITALY</text>
<text x="1243.5" y="659.7" textLength="7.5" lengthAdjust="spacingAndGlyphs" class="lt">B</text>
<g fill="#00f5b0" stroke="#1aa57e" stroke-width="0.8">
<circle cx="691.4" cy="344" r="7"/>
<circle cx="752.6" cy="351.5" r="17.3"/>
<circle cx="832" cy="363.6" r="7.8"/>
<circle cx="822.3" cy="385" r="7"/>
<circle cx="871.7" cy="203.2" r="7.3"/>
<circle cx="968.1" cy="221" r="7.5"/>
<circle cx="1059.5" cy="190.1" r="7"/>
<circle cx="904" cy="293.4" r="6.6"/>
<circle cx="883.2" cy="380.7" r="17.9"/>
<circle cx="955.7" cy="437.6" r="8"/>
<circle cx="863.2" cy="453.3" r="7.2"/>
<circle cx="803.4" cy="453.5" r="21.3"/>
<circle cx="912.8" cy="526.5" r="12.6"/>
<circle cx="741" cy="567.6" r="12.6"/>
<circle cx="665.3" cy="575" r="6.5"/>
</g>
<g transform="translate(480 645)"><path d="M0 0l3.6 1.2v10.3l5-2.8l-2.4-1.2l-1.3-3.1l7.3 2.6v3.9l-8.6 5l-3.6-2z" fill="#111"/></g>
<text x="496" y="658.5" style="font:14.5px 'Liberation Sans',sans-serif;fill:#111">Bing</text>
<text x="938" y="664.5" textLength="286" lengthAdjust="spacingAndGlyphs" style="font:10.5px 'Liberation Sans',sans-serif;fill:#111;stroke:#fff;stroke-width:1.6px;paint-order:stroke">© 2020 TomTom © 2020 HERE, © 2020 Microsoft Corporation <tspan fill="#3a5fcd" text-decoration="underline">Terms</tspan></text>
</svg><!--/MAP-->
<!-- handles -->
<svg class="a" style="left:460px;top:60px" width="810" height="627">
 <g fill="#999">
  <path d="M8 8h12.5v4.5h-8v7.5h-4.5z"/>
  <path d="M798 8h-12.5v4.5h8v7.5h4.5z"/>
  <path d="M8 618h12.5v-4.5h-8v-8h-4.5z"/>
  <path d="M798 618h-12.5v-4.5h8v-8h4.5z"/>
  <rect x="395" y="8" width="15" height="4.5"/>
  <rect x="395" y="613.5" width="15" height="4.5"/>
  <rect x="8" y="305" width="5" height="15"/>
  <rect x="793" y="305" width="5" height="15"/>
 </g>
</svg>
<!-- visual header icons -->
<svg class="a" style="left:1005px;top:40px" width="260" height="28">
 <g fill="none" stroke-width="1.2">
  <path d="M15 24.5V5.5M6.5 14l8.5-8.5l8.5 8.5" stroke="#c0c0c0"/>
  <path d="M50.5 5.5v19M42 16l8.5 8.5l8.5-8.5" stroke="#555"/>
  <path d="M81 5.5v19M76 19.5l5 5l5-5M90.5 5.5v19M85.5 19.5l5 5l5-5" stroke="#555"/>
  <path d="M120 5v8.5M115 13.5h10M115 13.5v11M125 13.5v11M111 20l4 4l4-4M121 20l4 4l4-4" stroke="#555"/>
  <path d="M155.5 6.5h20l-7 9v8.5h-6v-8.5z" stroke="#555"/>
  <path d="M197 9h-4.5v15h17v-9.5M192.5 16.5h9.5v7.5M201 15.5l7.5-7.5M203.5 8h5v5" stroke="#555"/>
 </g>
 <g fill="#444"><circle cx="228.5" cy="13.5" r="1.4"/><circle cx="235.5" cy="13.5" r="1.4"/><circle cx="242.5" cy="13.5" r="1.4"/></g>
</svg>
<!-- annotations -->
<svg class="a" style="left:0;top:0" width="1920" height="687">
 <g fill="none" stroke="#000">
  <path d="M179.5 6.3H760.5a16.5 16.5 0 0 1 16.5 16.5v0a15.5 15.5 0 0 1 -15.5 15.5H179.5a16.5 16.5 0 0 1 -16.5 -16.5v0a15.5 15.5 0 0 1 16.5 -15.5z" stroke-width="1.6"/>
  <path d="M216.5 39v108" stroke-width="1.2"/>
  <path d="M215.8 147.5L197 137.8L215.8 171.5L234.3 137.8z" stroke-width="1.3" fill="#fff" stroke-linejoin="miter"/>
  <path d="M429.5 38.5v518.8H356" stroke-width="3"/>
  <path d="M356 557.3H297" stroke-width="2.7" stroke="#1a1a1a"/>
  <path d="M278 557.2L305.6 540.8L297 557.2L305.6 573.4z" stroke-width="2.4" stroke="#2a2a2a" fill="#fff" stroke-linejoin="miter"/>
  <rect x="112.5" y="179.5" width="201" height="44" stroke-width="1.2"/>
  <path d="M1501.5 315H1418v90" stroke-width="3"/>
  <path d="M1418 406L1396 393.5l22 38.5l22-38.5z" stroke-width="2.2" fill="#fff"/>
  <rect x="1506" y="296" width="217" height="33" rx="16" stroke-width="2.2"/>
  <rect x="1690.5" y="151" width="222" height="311" rx="30" stroke-width="2.4"/>
  <path d="M1814 462v58" stroke-width="3"/>
  <path d="M1814 521L1799 509l15 31.5l15.5-31.5z" stroke-width="2.2" fill="#fff"/>
  <circle cx="1712.5" cy="239.5" r="3.2" stroke-width="2"/>
 </g>
</svg>
<div class="a" style="left:124.2px;top:182.5px;font-size:36px;color:#000;white-space:nowrap;transform-origin:0 0;transform:scaleX(0.895)">Formula Bar</div>
<div class="a red" style="left:14px;top:225px;width:400px;text-align:center;line-height:35.3px;letter-spacing:1.05px;font-size:24.5px">Write the calculations required for<br>the calculated measure in this<br>section</div>
<div class="a red" style="left:193.5px;top:545px;font-size:25px;letter-spacing:0.5px">Step 3</div>
<div class="a red" style="left:1381px;top:438px;font-size:25px;letter-spacing:0.7px">Step 2</div>
<div class="a red" style="left:1777px;top:546px;font-size:25px;letter-spacing:0.5px">Step 1</div>
</body></html>
